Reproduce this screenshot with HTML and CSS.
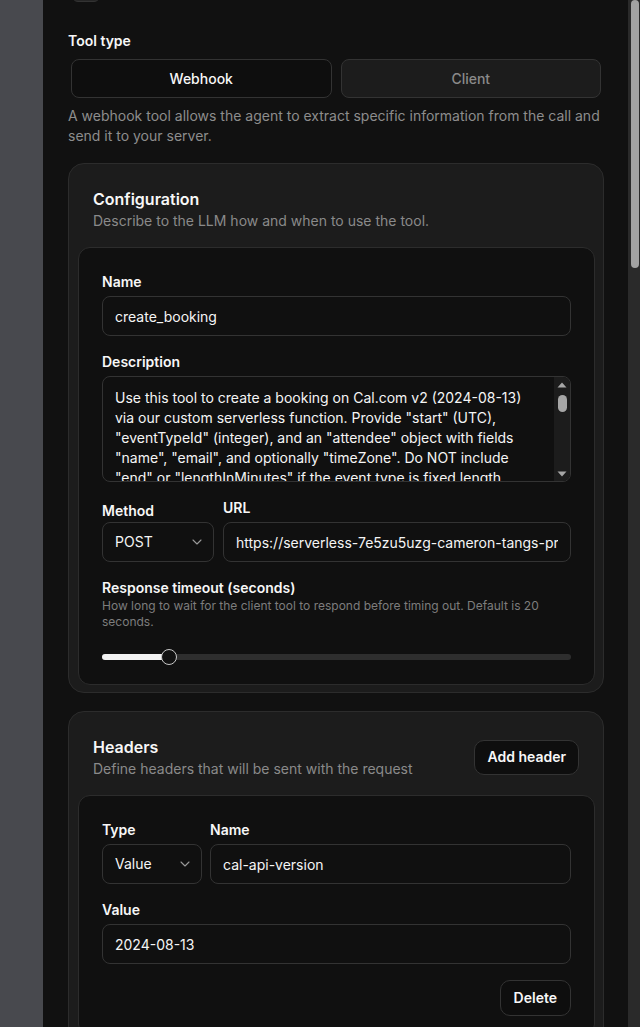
FILE: index.html
```html
<!DOCTYPE html>
<html lang="en">
<head>
<meta charset="utf-8">
<title>Edit tool</title>
<link rel="stylesheet" href="styles.css">
</head>
<body>
<div class="app">
  <div class="rail"></div>
  <main class="panel">
    <div class="stub"></div>

    <section class="tool-type">
      <div class="label">Tool type</div>
      <div class="segmented">
        <button class="seg seg-active">Webhook</button>
        <button class="seg">Client</button>
      </div>
      <p class="hint">A webhook tool allows the agent to extract specific information from the call and send it to your server.</p>
    </section>

    <section class="card">
      <div class="card-head">
        <div>
          <h2 class="card-title">Configuration</h2>
          <p class="card-sub">Describe to the LLM how and when to use the tool.</p>
        </div>
      </div>
      <div class="inner">
        <div class="field">
          <div class="label">Name</div>
          <input class="input" type="text" value="create_booking">
        </div>
        <div class="field">
          <div class="label">Description</div>
          <div class="textbox">
            <textarea class="textbox-input">Use this tool to create a booking on Cal.com v2 (2024-08-13) via our custom serverless function. Provide "start" (UTC), "eventTypeId" (integer), and an "attendee" object with fields "name", "email", and optionally "timeZone". Do NOT include "end" or "lengthInMinutes" if the event type is fixed length.</textarea>
            <div class="textbox-bar">
              <svg class="arrow" width="10" height="6" viewBox="0 0 10 6"><path d="M5 0.5 9.5 5.5H0.5Z" fill="#a6a6a6"/></svg>
              <div class="textbox-thumb"></div>
              <div class="textbox-spacer"></div>
              <svg class="arrow" width="10" height="6" viewBox="0 0 10 6"><path d="M0.5 0.5H9.5L5 5.5Z" fill="#a6a6a6"/></svg>
            </div>
          </div>
        </div>
        <div class="field-row">
          <div class="field field-method">
            <div class="label label-method">Method</div>
            <div class="select">
              <span>POST</span>
              <svg width="16" height="16" viewBox="0 0 24 24" fill="none" stroke="#9a9a9a" stroke-width="1.6" stroke-linecap="round" stroke-linejoin="round"><path d="m6 9 6 6 6-6"/></svg>
            </div>
          </div>
          <div class="field field-grow">
            <div class="label">URL</div>
            <input class="input" type="text" value="https://serverless-7e5zu5uzg-cameron-tangs-projects.vercel.app/api/create-booking">
          </div>
        </div>
        <div class="field">
          <div class="label">Response timeout (seconds)</div>
          <p class="help">How long to wait for the client tool to respond before timing out. Default is 20 seconds.</p>
          <div class="slider">
            <div class="slider-track"><div class="slider-fill" style="width:14.3%"></div></div>
            <div class="slider-thumb" style="left:14.3%"></div>
          </div>
        </div>
      </div>
    </section>

    <section class="card">
      <div class="card-head">
        <div>
          <h2 class="card-title">Headers</h2>
          <p class="card-sub">Define headers that will be sent with the request</p>
        </div>
        <button class="btn">Add header</button>
      </div>
      <div class="inner">
        <div class="field-row field-row-tight">
          <div class="field field-type">
            <div class="label">Type</div>
            <div class="select">
              <span>Value</span>
              <svg width="16" height="16" viewBox="0 0 24 24" fill="none" stroke="#9a9a9a" stroke-width="1.6" stroke-linecap="round" stroke-linejoin="round"><path d="m6 9 6 6 6-6"/></svg>
            </div>
          </div>
          <div class="field field-grow">
            <div class="label">Name</div>
            <input class="input" type="text" value="cal-api-version">
          </div>
        </div>
        <div class="field">
          <div class="label">Value</div>
          <input class="input" type="text" value="2024-08-13">
        </div>
        <div class="actions">
          <button class="btn btn-delete">Delete</button>
        </div>
      </div>
    </section>
  </main>
  <div class="scrollbar"><div class="scrollbar-thumb"></div></div>
</div>
</body>
</html>
```
FILE: styles.css
```css
* { box-sizing: border-box; }

html, body {
  margin: 0;
  height: 100%;
}

body {
  background: #48494e;
  font-family: Inter, "Noto Sans", sans-serif;
  color: #f5f5f5;
  overflow: hidden;
}

.app {
  display: flex;
  height: 100%;
}

.rail {
  width: 43px;
  flex: none;
}

.panel {
  flex: 1;
  min-width: 0;
  background: #111111;
  overflow: hidden;
  padding: 0 24px 0 25px;
}

.scrollbar {
  width: 12px;
  flex: none;
  background: #2a2a2a;
  padding: 0 1px 0 3px;
}

.scrollbar-thumb {
  height: 268px;
  background: #a2a2a2;
  border-radius: 4px;
}

.stub {
  width: 28px;
  height: 24px;
  margin: -22px 0 0 4px;
  background: #252525;
  border: 1px solid #333;
  border-radius: 6px;
}

.label {
  font-size: 14px;
  line-height: 20px;
  font-weight: 600;
  color: #f7f7f7;
  margin-bottom: 4px;
}

.tool-type { margin-top: 29px; }
.tool-type .label { margin-bottom: 8px; }

.segmented {
  display: grid;
  grid-template-columns: 1fr 1fr;
  gap: 9px;
  padding: 0 3px;
}

.seg {
  height: 39px;
  border-radius: 8px;
  border: 1px solid #333;
  background: #1c1c1c;
  color: #8a8a8a;
  font: 500 14px/20px Inter, "Noto Sans", sans-serif;
}

.seg-active {
  background: #0e0e0e;
  color: #f7f7f7;
}

.hint {
  margin: 8px 0 0;
  font-size: 14px;
  line-height: 20px;
  color: #8d8d8d;
}

.card {
  margin-top: 17px;
  background: #1c1c1c;
  border: 1px solid #2c2c2c;
  border-radius: 16px;
  padding: 0 8px 7px 9px;
}

.card + .card { margin-top: 18px; }

.card-head {
  display: flex;
  align-items: center;
  justify-content: space-between;
  padding: 23px 16px 16px 15px;
}

.card-title {
  margin: 0;
  font-size: 16px;
  line-height: 24px;
  font-weight: 600;
  color: #f7f7f7;
}

.card-sub {
  margin: 0;
  font-size: 14px;
  line-height: 20px;
  color: #8a8a8a;
}

.inner {
  background: #101010;
  border: 1px solid #2c2c2c;
  border-radius: 12px;
  padding: 24px 23px 19px;
  display: flex;
  flex-direction: column;
  gap: 16px;
}

.field {
  display: flex;
  flex-direction: column;
  min-width: 0;
}

.field-row {
  display: flex;
  gap: 9px;
}

.field-row-tight { gap: 8px; }

.field-method { width: 112px; flex: none; }
.field-type { width: 100px; flex: none; }
.field-grow { flex: 1; }

.label-method {
  padding-top: 3px;
  margin-bottom: 1px;
}

.input {
  height: 40px;
  width: 100%;
  padding: 0 12px;
  border: 1px solid #333;
  border-radius: 8px;
  background: #101010;
  color: #f5f5f5;
  font: 400 14px/20px Inter, "Noto Sans", sans-serif;
  outline: none;
}

.textbox {
  display: flex;
  height: 106px;
  border: 1px solid #333;
  border-radius: 8px;
  background: #101010;
  overflow: hidden;
}

.textbox-input {
  flex: 1;
  min-width: 0;
  border: 0;
  margin: 0;
  background: transparent;
  resize: none;
  overflow: hidden;
  padding: 11px 13px 0 12px;
  color: #f5f5f5;
  font: 400 14px/20px Inter, "Noto Sans", sans-serif;
  outline: none;
}

.textbox-bar {
  width: 16px;
  flex: none;
  background: #1c1c1c;
  display: flex;
  flex-direction: column;
  align-items: center;
  padding: 5px 0 4px;
}

.arrow { flex: none; }

.textbox-thumb {
  width: 9px;
  height: 17px;
  margin-top: 7px;
  border-radius: 4.5px;
  background: #a6a6a6;
}

.textbox-spacer { flex: 1; }

.select {
  height: 40px;
  display: flex;
  align-items: center;
  justify-content: space-between;
  padding: 0 8px 0 12px;
  border: 1px solid #333;
  border-radius: 8px;
  background: #101010;
  font-size: 14px;
  line-height: 20px;
  color: #f5f5f5;
}

.help {
  margin: -4px 0 0;
  font-size: 12px;
  line-height: 16px;
  color: #7d7d7d;
}

.slider {
  position: relative;
  height: 16px;
  margin-top: 19px;
  display: flex;
  align-items: center;
}

.slider-track {
  flex: 1;
  height: 6px;
  border-radius: 3px;
  background: #2e2e2e;
  overflow: hidden;
}

.slider-fill {
  height: 100%;
  background: #f2f2f2;
}

.slider-thumb {
  position: absolute;
  top: 0;
  width: 16px;
  height: 16px;
  border-radius: 50%;
  background: #111;
  border: 1.5px solid #c8c8c8;
  transform: translateX(-50%);
}

.btn {
  height: 35px;
  padding: 0 12px;
  border: 1px solid #333;
  border-radius: 10px;
  background: #0e0e0e;
  color: #f7f7f7;
  font: 600 14px/20px Inter, "Noto Sans", sans-serif;
  flex: none;
}

.actions {
  display: flex;
  justify-content: flex-end;
}

.btn-delete {
  height: 36px;
  padding: 0 13px;
}
```
